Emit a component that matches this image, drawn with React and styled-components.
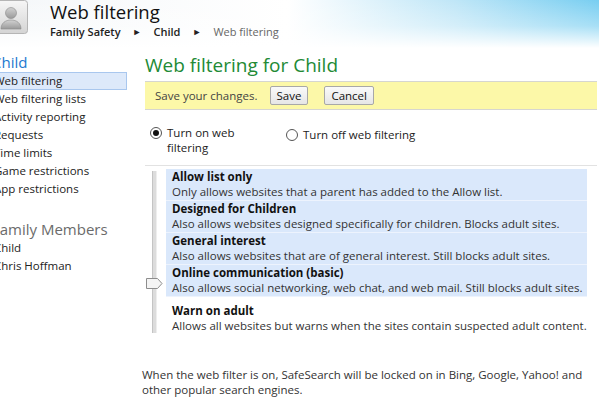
import React from "react";
import styled, { createGlobalStyle } from "styled-components";

const GlobalStyle = createGlobalStyle`
  body {
    margin: 0;
    background: #fff;
    font-family: "Open Sans", "Noto Sans", sans-serif;
    color: #222;
  }
`;

const Page = styled.div`
  width: 599px;
  height: 400px;
  overflow: hidden;
  background: #fff;
`;

/* header with the sky gradient */
const Header = styled.header`
  display: flex;
  align-items: flex-start;
  gap: 22px;
  height: 48px;
  background:
    linear-gradient(to bottom, rgba(255, 255, 255, 0) 0, rgba(255, 255, 255, 0.35) 26px, #fff 48px),
    linear-gradient(to right, #f4f7f9 0, #fff 48%, #bfe6f7 76%, #78cef1 100%);
`;

const Avatar = styled.svg`
  flex: none;
  margin-left: -6px;
`;

const TitleBlock = styled.div`
  display: flex;
  flex-direction: column;
`;

const Title = styled.h1`
  margin: 0;
  font-size: 18.5px;
  font-weight: 400;
  line-height: 24px;
  color: #111;
`;

const Crumbs = styled.div`
  display: flex;
  align-items: center;
  gap: 12px;
  font-size: 11px;
  line-height: 15px;
`;

const Crumb = styled.span`
  font-weight: ${(p) => (p.$current ? 400 : 600)};
  color: ${(p) => (p.$current ? "#666" : "#222")};
`;

const Arrow = styled.span`
  font-size: 9px;
  color: #222;
`;

const Body = styled.div`
  display: flex;
`;

const Sidebar = styled.nav`
  flex: none;
  width: 135px;
  margin-left: -8px;
  padding-top: 5px;
`;

const SideHeading = styled.h2`
  margin: ${(p) => (p.$muted ? "22px 0 1px" : "0 0 1px")};
  font-size: 15px;
  font-weight: 400;
  line-height: 18px;
  color: ${(p) => (p.$muted ? "#6b6b6b" : "#2479d0")};
`;

const NavItem = styled.div`
  box-sizing: border-box;
  height: 18px;
  padding-left: 1px;
  font-size: 11.5px;
  line-height: 16px;
  color: #222;
  background: ${(p) => (p.$active ? "#dde9fa" : "transparent")};
  border: 1px solid ${(p) => (p.$active ? "#a9c7ee" : "transparent")};
`;

const Main = styled.main`
  flex: none;
  width: 452px;
  margin-left: 18px;
`;

const Heading = styled.h2`
  margin: 4px 0 3px;
  font-size: 19px;
  font-weight: 400;
  line-height: 26px;
  color: #228a35;
`;

const SaveBar = styled.div`
  display: flex;
  align-items: center;
  height: 27px;
  padding-left: 10px;
  background: #fcf8a8;
  border-top: 1px solid #d6d6d0;
  border-bottom: 1px solid #d6d6d0;
  font-size: 11.5px;
  color: #444;
`;

const Button = styled.button`
  height: 19px;
  margin-left: ${(p) => p.$gap}px;
  padding: 0 6px;
  font-family: inherit;
  font-size: 11.5px;
  line-height: 15px;
  color: #111;
  background: linear-gradient(#fafafa, #e6e6e6);
  border: 1px solid #a8a8a8;
  border-radius: 2px;
`;

const RadioRow = styled.div`
  display: flex;
  gap: 16px;
  height: 40px;
  padding: 15px 0 0 5px;
  border-bottom: 1px solid #e2e2e2;
`;

const RadioLabel = styled.label`
  display: flex;
  align-items: flex-start;
  gap: 5px;
  width: ${(p) => p.$width}px;
  font-size: 11.5px;
  line-height: 15px;
  color: #222;
  ${(p) => p.$offset && `margin-top: ${p.$offset}px;`}
`;

const RadioDot = styled.span`
  flex: none;
  width: 10px;
  height: 10px;
  margin-top: 2px;
  border-radius: 50%;
  border: 1px solid #555;
  background: #fff;
  display: flex;
  align-items: center;
  justify-content: center;

  &::after {
    content: "";
    width: 6px;
    height: 6px;
    border-radius: 50%;
    background: ${(p) => (p.$on ? "#111" : "transparent")};
  }
`;

const LevelArea = styled.div`
  display: flex;
  padding-top: 3px;
`;

const SliderCol = styled.div`
  flex: none;
  position: relative;
  width: 21px;
`;

const Track = styled.div`
  width: 3px;
  height: 162px;
  margin: 2px 0 0 7px;
  background: #dcdcdc;
  border-left: 1px solid #c4c4c4;
  border-right: 1px solid #eee;
`;

const Thumb = styled.svg`
  position: absolute;
  left: 1px;
  top: 109px;
`;

const Levels = styled.div`
  width: 421px;
`;

const Level = styled.div`
  padding: 0 6px;
  height: 31px;
  background: ${(p) => (p.$on ? "#dae8fb" : "transparent")};
  border-bottom: 1px solid ${(p) => (p.$on ? "#edf3fd" : "transparent")};
  ${(p) => !p.$on && "margin-top: 6px;"}
`;

const LevelTitle = styled.div`
  font-size: 11.5px;
  font-weight: 700;
  line-height: 15px;
  color: #111;
`;

const LevelText = styled.div`
  font-size: 11.5px;
  line-height: 16px;
  color: #333;
  white-space: nowrap;
`;

const Note = styled.p`
  margin: 32px 0 0 -3px;
  font-size: 11.5px;
  line-height: 15px;
  color: #333;
`;

const levels = [
  ["Allow list only", "Only allows websites that a parent has added to the Allow list.", true],
  ["Designed for Children", "Also allows websites designed specifically for children. Blocks adult sites.", true],
  ["General interest", "Also allows websites that are of general interest. Still blocks adult sites.", true],
  ["Online communication (basic)", "Also allows social networking, web chat, and web mail. Still blocks adult sites.", true],
  ["Warn on adult", "Allows all websites but warns when the sites contain suspected adult content.", false],
];

const navItems = [
  "Web filtering",
  "Web filtering lists",
  "Activity reporting",
  "Requests",
  "Time limits",
  "Game restrictions",
  "App restrictions",
];

const App = () => {
  return (
    <Page>
      <GlobalStyle />
      <Header>
        <Avatar width="34" height="34" viewBox="0 0 34 34">
          <defs>
            <linearGradient id="tile" x1="0" y1="0" x2="0" y2="1">
              <stop offset="0" stopColor="#f6f6f6" />
              <stop offset="1" stopColor="#d4d4d4" />
            </linearGradient>
            <linearGradient id="man" x1="0" y1="0" x2="0" y2="1">
              <stop offset="0" stopColor="#d2d2d2" />
              <stop offset="1" stopColor="#9a9a9a" />
            </linearGradient>
          </defs>
          <rect x="0.5" y="0.5" width="33" height="33" rx="3" fill="url(#tile)" stroke="#b5b5b5" />
          <circle cx="17" cy="13" r="5.5" fill="url(#man)" stroke="#8a8a8a" strokeWidth="0.6" />
          <path d="M7 29c0-6 4.5-9 10-9s10 3 10 9z" fill="url(#man)" stroke="#8a8a8a" strokeWidth="0.6" />
        </Avatar>
        <TitleBlock>
          <Title>Web filtering</Title>
          <Crumbs>
            <Crumb>Family Safety</Crumb>
            <Arrow>►</Arrow>
            <Crumb>Child</Crumb>
            <Arrow>►</Arrow>
            <Crumb $current>Web filtering</Crumb>
          </Crumbs>
        </TitleBlock>
      </Header>

      <Body>
        <Sidebar>
          <SideHeading>Child</SideHeading>
          {navItems.map((item, i) => (
            <NavItem key={item} $active={i === 0}>
              {item}
            </NavItem>
          ))}
          <SideHeading $muted>Family Members</SideHeading>
          <NavItem>Child</NavItem>
          <NavItem>Chris Hoffman</NavItem>
        </Sidebar>

        <Main>
          <Heading>Web filtering for Child</Heading>
          <SaveBar>
            Save your changes.
            <Button $gap={12}>Save</Button>
            <Button $gap={16}>Cancel</Button>
          </SaveBar>

          <RadioRow>
            <RadioLabel $width={120}>
              <RadioDot $on />
              <span>
                Turn on web
                <br />
                filtering
              </span>
            </RadioLabel>
            <RadioLabel $width={160} $offset={2}>
              <RadioDot />
              <span>Turn off web filtering</span>
            </RadioLabel>
          </RadioRow>

          <LevelArea>
            <SliderCol>
              <Track />
              <Thumb width="17" height="11" viewBox="0 0 17 11">
                <path d="M0.5 0.5h11l4.5 5-4.5 5h-11z" fill="#f4f4f4" stroke="#8d8d8d" />
              </Thumb>
            </SliderCol>
            <Levels>
              {levels.map(([title, text, on]) => (
                <Level key={title} $on={on}>
                  <LevelTitle>{title}</LevelTitle>
                  <LevelText>{text}</LevelText>
                </Level>
              ))}
            </Levels>
          </LevelArea>

          <Note>
            When the web filter is on, SafeSearch will be locked on in Bing, Google, Yahoo! and
            other popular search engines.
          </Note>
        </Main>
      </Body>
    </Page>
  );
};

export default App;
